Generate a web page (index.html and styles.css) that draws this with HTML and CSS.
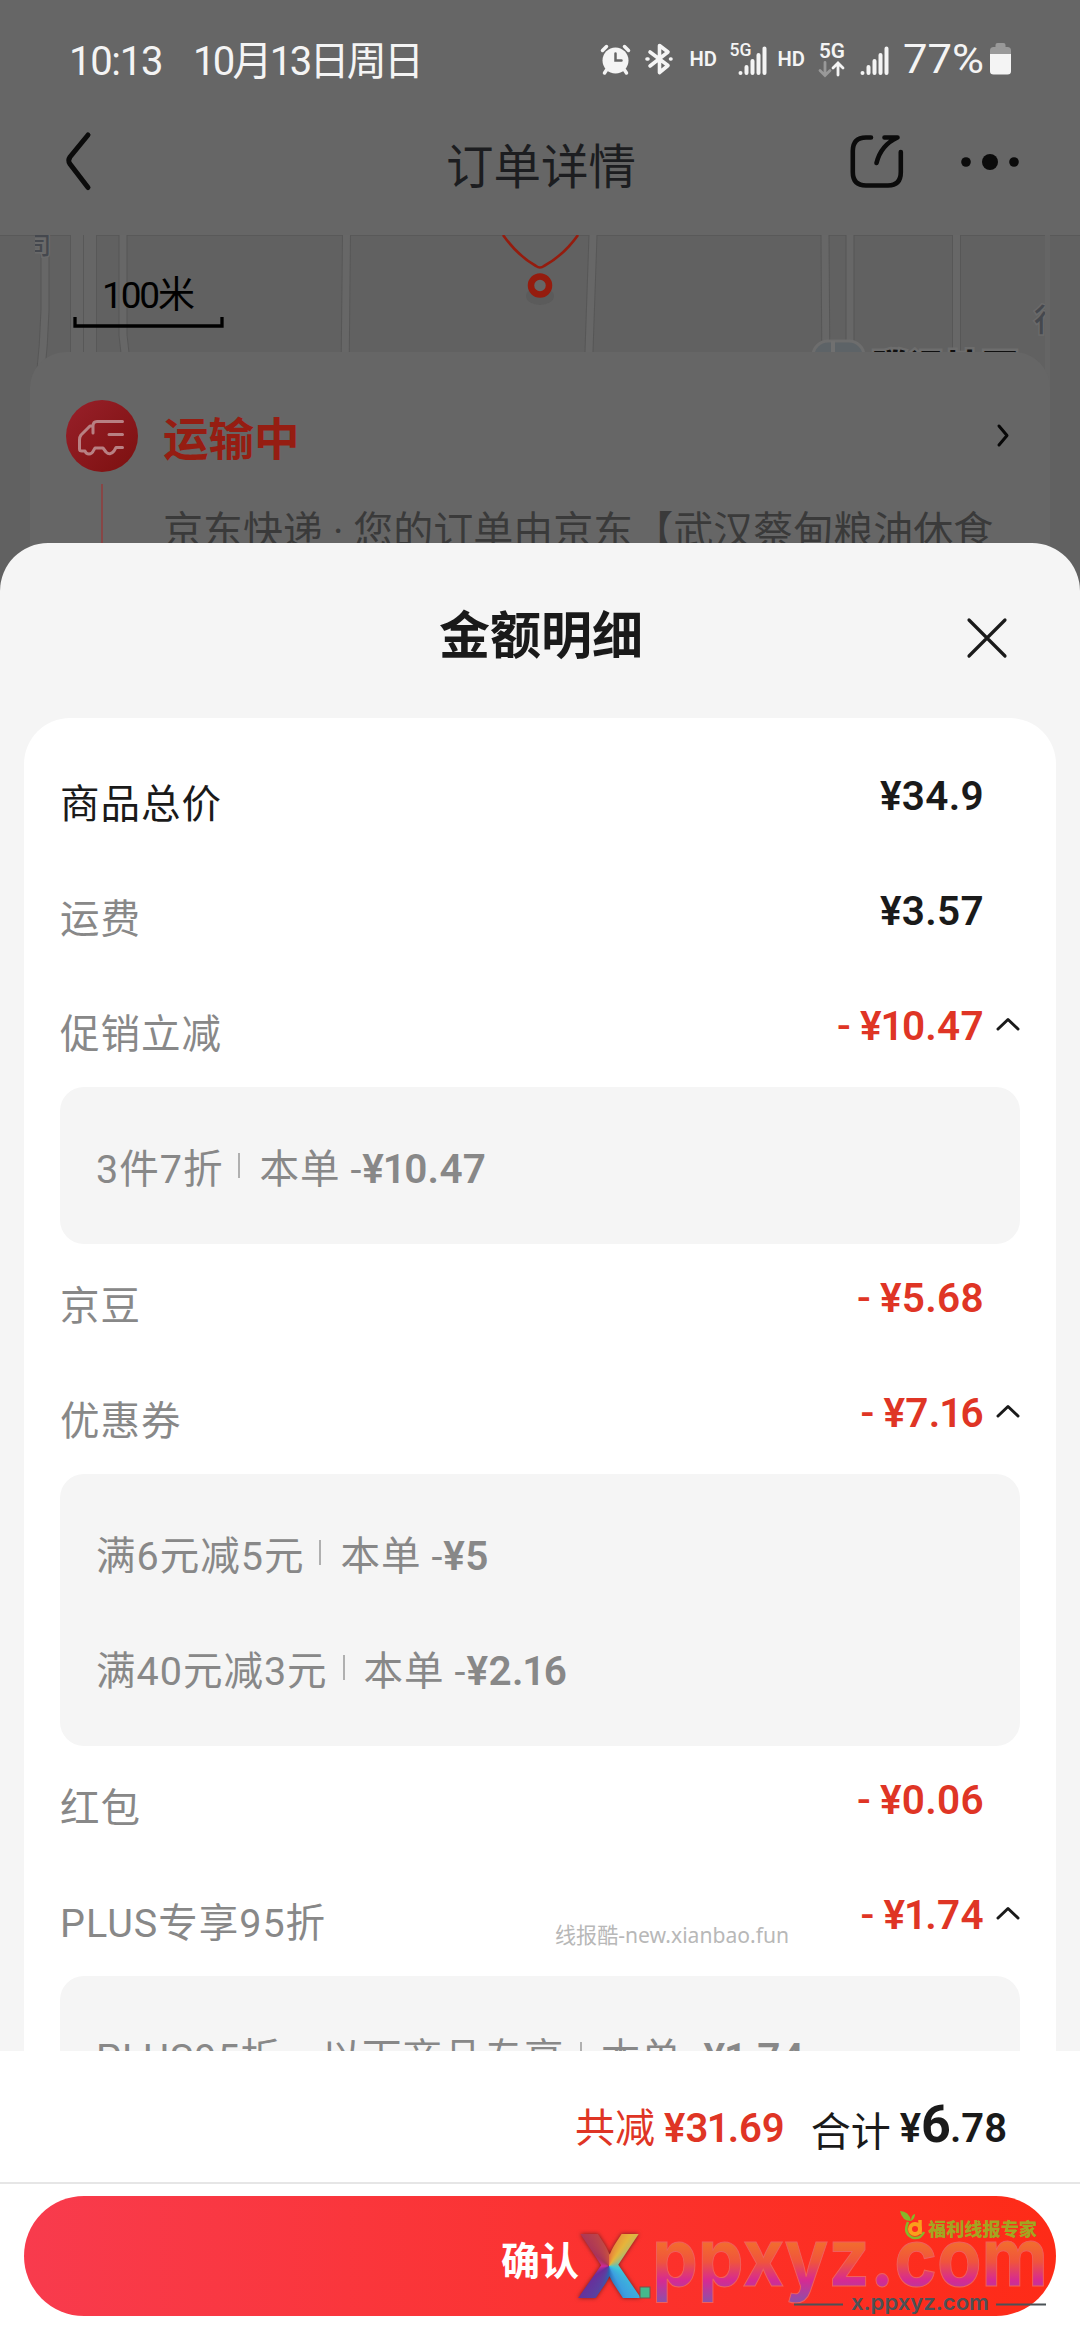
FILE: index.html
```html
<!DOCTYPE html>
<html lang="zh-CN">
<head>
<meta charset="utf-8">
<title>金额明细</title>
<link rel="stylesheet" href="styles.css">
</head>
<body>
<div class="screen">
  <div class="page">
    <header class="status">
      <span class="time">10:13</span><span class="date">10月13日周日</span>
      <svg class="status-icons" width="412" height="40" viewBox="600 39 412 40">
        <g fill="#f4f4f4" stroke="#f4f4f4" stroke-linecap="round">
          <circle cx="615.5" cy="60.500" r="13" stroke="none"/>
          <path d="M602.500 50.500l4-4M628.500 50.500l-4-4M606.500 70l-2 3M624.500 70l2 3" stroke-width="3.500"/>
          <path d="M615.500 53.500v7h6" fill="none" stroke="#666" stroke-width="2.500"/>
          <path d="M650 52l18 13.500-8.500 7V45.500l8.500 6.500L650 66" fill="none" stroke-width="3.600" stroke-linejoin="round"/>
          <path d="M647 59h1M670.500 59h.5" stroke-width="3.600"/>
          <path d="M740.500 73v.1M746.500 67v6M752.500 61v12M758.500 55v18M764.500 48.500V73" stroke-width="4"/>
          <path d="M862.500 73v.1M868.500 67v6M874.500 61v12M880.500 55v18M886.500 48.500V73" stroke-width="4"/>
          <path d="M838 75V63.500M833 68l5-5 5 5" fill="none" stroke-width="2.800"/>
          <path d="M825 62.500V75M820 70.500l5 5 5-5" fill="none" stroke="#999" stroke-width="2.800"/>
        </g>
        <rect x="990" y="47" width="21" height="27" rx="3.500" fill="#999"/>
        <rect x="995.500" y="43" width="10" height="6" rx="2" fill="#999"/>
        <path d="M990 54h21v17a3.500 3.500 0 0 1-3.500 3.500h-14a3.500 3.500 0 0 1-3.500-3.500z" fill="#f4f4f4"/>
        <g class="sig">
          <text x="689.500" y="65.500" textLength="27.500" lengthAdjust="spacingAndGlyphs">HD</text>
          <text x="777.500" y="65.500" textLength="27.500" lengthAdjust="spacingAndGlyphs">HD</text>
          <text class="sig-light" x="729.500" y="55.500" textLength="22" lengthAdjust="spacingAndGlyphs">5G</text>
          <text x="819" y="57.500" textLength="26" lengthAdjust="spacingAndGlyphs">5G</text>
          <text class="pct" x="903" y="72.500" textLength="81" lengthAdjust="spacingAndGlyphs">77%</text>
        </g>
      </svg>
    </header>
    <nav class="nav">
      <svg class="back" width="30" height="64" viewBox="64 130 30 64"><path d="M88 135L70 157Q67.500 160.500 70 164L88 187.500" fill="none" stroke="#0b0b0b" stroke-width="5" stroke-linecap="round"/></svg>
      <h1 class="nav-title">订单详情</h1>
      <svg class="tools" width="172" height="64" viewBox="848 130 172 64">
        <path d="M871 137.500H866Q852.800 137.500 852.800 151V172Q852.800 185.500 866 185.500H888Q900.800 185.500 900.800 172V152M884.500 137.500H897.500Q881 145 876.500 163" fill="none" stroke="#0b0b0b" stroke-width="4.600" stroke-linecap="round" stroke-linejoin="round"/>
        <circle cx="966" cy="162" r="4.800"/><circle cx="990" cy="162" r="8"/><circle cx="1014" cy="162" r="4.800"/>
      </svg>
    </nav>
    <svg class="map" width="1080" height="160" viewBox="0 235 1080 160">
      <rect x="0" y="235" width="1080" height="160" fill="#616161"/>
      <path d="M0 235.500H1080" stroke="#595959"/>
      <g fill="none">
        <path d="M45 235V310Q44 345 40 380M123 235V335L128 380M346.500 235L345 380M593 235L588 380M825 235L826 380M850 235V380M956.500 235V380" stroke="#575757" stroke-width="9"/>
        <path d="M45 235V310Q44 345 40 380M123 235V335L128 380M346.500 235L345 380M593 235L588 380M825 235L826 380M850 235V380M956.500 235V380" stroke="#676767" stroke-width="7"/>
        <path d="M77 235V380M90 235V380" stroke="#666" stroke-width="12"/>
        <path d="M83.500 235V380M70.500 235V380M96.500 235V380" stroke="#585858"/>
      </g>
      <rect x="1045" y="235" width="5" height="160" fill="#656565"/>
      <svg x="35" y="235" width="20" height="30" viewBox="35 235 20 30"><text class="poi" x="27" y="254">司</text></svg>
      <svg x="1030" y="300" width="15" height="36" viewBox="1030 300 15 36"><text class="poi poi-lg" x="1034" y="331">行</text></svg>
      <path d="M503 235Q518 256 536 266Q540 269 544 266Q564 255 578 235" fill="none" stroke="#951c0e" stroke-width="2.600"/>
      <ellipse cx="540" cy="296" rx="14" ry="9" fill="#5b5b5b"/>
      <circle cx="540" cy="285.500" r="9" fill="#666" stroke="#951c0e" stroke-width="6.500"/>
      <text class="scale" x="102" y="308" textLength="93">100米</text>
      <path d="M75 317V326H222V317" fill="none" stroke="#000" stroke-width="3.300"/>
      <rect x="813" y="341" width="51" height="36" rx="15" fill="#5d6367" stroke="#6d6d6d" stroke-width="3"/>
      <path d="M833 341v12" stroke="#707070" stroke-width="4"/>
      <text class="brand" x="872" y="380.500" textLength="146">腾讯地图</text>
    </svg>
    <section class="track">
      <div class="track-row">
        <svg class="truck-icon" width="72" height="74" viewBox="66 399 72 74">
          <defs><linearGradient id="tg" x1="0" y1="0" x2="1" y2="1"><stop offset="0" stop-color="#98202a"/><stop offset="1" stop-color="#7c100f"/></linearGradient></defs>
          <circle cx="102" cy="436" r="36" fill="url(#tg)"/>
          <path d="M122.500 421.500H97Q93 421.500 93 426V433M93 426H90L81 435Q79.500 437 79.500 440V449Q79.500 451 82 451H85Q86 454 89 454Q92 454 93.500 450.500L95 448H103L106 452Q110 456 114 451L116 447.500H122.500M109 434.500H122.500" fill="none" stroke="#b88083" stroke-width="3" stroke-linecap="round" stroke-linejoin="round"/>
        </svg>
        <h2 class="track-title">运输中</h2>
        <svg class="go" width="20" height="30" viewBox="993 421 20 30"><path d="M998 426L1006 435.500L998 445" fill="none" stroke="#080808" stroke-width="3" stroke-linecap="round" stroke-linejoin="round"/></svg>
      </div>
      <div class="track-info"><i class="track-line"></i><p class="track-text">京东快递 · 您的订单由京东【武汉蔡甸粮油休食</p></div>
    </section>
  </div>

  <main class="sheet">
    <div class="sheet-head">
      <h2 class="sheet-title">金额明细</h2>
      <svg class="close" width="44" height="44" viewBox="0 0 44 44"><path d="M4 4L40 40M40 4L4 40" stroke="#1a1a1a" stroke-width="3.200" stroke-linecap="round"/></svg>
    </div>
    <div class="card">
      <div class="row"><span class="label dark">商品总价</span><span class="price">¥34.9</span></div>
      <div class="row"><span class="label">运费</span><span class="price">¥3.57</span></div>
      <div class="row"><span class="label">促销立减</span><span class="price red"><i>-</i>¥<em>1</em>0.47</span><svg class="up" viewBox="0 0 24 14"><path d="M2 12L12 2.500L22 12"/></svg></div>
      <div class="box"><div class="line"><span>3件7折</span><i class="sep"></i><span>本单</span><span class="cut">-<b>¥<em>1</em>0.47</b></span></div></div>
      <div class="row"><span class="label">京豆</span><span class="price red"><i>-</i>¥5.68</span></div>
      <div class="row"><span class="label">优惠券</span><span class="price red"><i>-</i>¥7.<em>1</em>6</span><svg class="up" viewBox="0 0 24 14"><path d="M2 12L12 2.500L22 12"/></svg></div>
      <div class="box">
        <div class="line"><span>满6元减5元</span><i class="sep"></i><span>本单</span><span class="cut">-<b>¥5</b></span></div>
        <div class="line"><span>满40元减3元</span><i class="sep"></i><span>本单</span><span class="cut">-<b>¥2.<em>1</em>6</b></span></div>
      </div>
      <div class="row"><span class="label">红包</span><span class="price red"><i>-</i>¥0.06</span></div>
      <div class="row"><span class="label">PLUS专享95折</span><span class="price red"><i>-</i>¥<em>1</em>.74</span><svg class="up" viewBox="0 0 24 14"><path d="M2 12L12 2.500L22 12"/></svg></div>
      <div class="box"><div class="line"><span>PLUS95折，以下商品专享</span><i class="sep"></i><span>本单</span><span class="cut">-<b>¥<em>1</em>.74</b></span></div></div>
    </div>
  </main>

  <footer class="footer">
    <div class="totals">
      <span class="saved">共减</span><span class="saved-price">¥3<em>1</em>.69</span>
      <span class="sum">合计</span><span class="sum-price">¥<big>6</big>.78</span>
    </div>
    <div class="action"><button class="confirm">确认</button></div>
  </footer>

  <div class="stamp">线报酷-new.xianbao.fun</div>
  <div class="logo-x">X</div>
  <svg class="logo" width="480" height="120" viewBox="600 2205 480 120">
    <defs>
      <linearGradient id="lg" gradientUnits="userSpaceOnUse" x1="0" y1="2240" x2="0" y2="2302">
        <stop offset="0" stop-color="#f2702c"/><stop offset=".35" stop-color="#f0543c"/><stop offset=".65" stop-color="#d62a92"/><stop offset="1" stop-color="#8d50a8"/>
      </linearGradient>
    </defs>
    <rect x="640" y="2287" width="10" height="11" fill="#45b98c" stroke="#7b5048"/>
    <text class="logo-word" x="652" y="2286" textLength="396" lengthAdjust="spacingAndGlyphs" fill="url(#lg)">ppxyz.com</text>
    <text class="logo-sub" x="851" y="2310" textLength="138" lengthAdjust="spacingAndGlyphs">x.ppxyz.com</text>
    <path d="M794 2304.500H843M996 2304.500H1046" stroke="#4b5257" stroke-width="2"/>
    <text class="logo-cn" x="928" y="2236" textLength="109" lengthAdjust="spacingAndGlyphs">福利线报专家</text>
    <path d="M900 2211Q909 2211 911 2221Q902 2221 900 2211M911 2221Q911 2215 915 2214Q915 2219 911 2221" fill="#86b82a"/>
    <path d="M908 2222Q903 2233 912 2237.500Q920 2240 924 2232" fill="none" stroke="#86b82a" stroke-width="2.500"/>
    <circle cx="915" cy="2229" r="5" fill="none" stroke="#f9a01b" stroke-width="4"/>
    <path d="M920 2220V2234" stroke="#f9a01b" stroke-width="3.500"/>
  </svg>
</div>
</body>
</html>
```
FILE: styles.css
```css
* { box-sizing: border-box; margin: 0; padding: 0; }
body { width: 1080px; font-family: Roboto, "Noto Sans CJK SC", sans-serif; background: #616161; }
i, em { font-style: normal; }
em { margin: 0 -2px 0 -1.500px; }
svg { display: block; flex: none; }
.screen { position: relative; width: 1080px; height: 2340px; overflow: hidden; display: flex; flex-direction: column; background: #616161; }

/* dimmed order page */
.page { height: 591px; flex: none; overflow: hidden; background: #616161; margin-bottom: -48px; }
.status { height: 118px; display: flex; align-items: flex-start; padding: 40px 68px 0 69px; background: #666; color: #f4f4f4; font-size: 40px; line-height: 44px; }
.time { width: 124px; letter-spacing: -1.300px; }
.date { letter-spacing: -2.700px; white-space: nowrap; }
.status-icons { margin: -1px 0 0 auto; }
.sig { fill: #f4f4f4; font-size: 20px; font-weight: 600; }
.sig-light { font-size: 17.500px; font-weight: 500; }
.pct { font-size: 40px; font-weight: 400; }
.nav { height: 117px; display: flex; align-items: flex-start; padding: 12px 60px 0 64px; background: #666; }
.nav-title { flex: 1; padding-left: 352px; padding-top: 10px; font-size: 47.500px; line-height: 56px; font-weight: 400; color: #1c1d20; }
.tools { fill: #0b0b0b; }
.poi { font-size: 24px; font-weight: 500; fill: #45484e; stroke: #6a6a6a; stroke-width: 3px; paint-order: stroke; }
.poi-lg { font-size: 31px; }
.scale { font-size: 37px; fill: #000; }
.brand { font-size: 36px; font-weight: 900; fill: #101010; stroke: #6d6d6d; stroke-width: 5px; paint-order: stroke; }
.track { position: relative; margin: -43px 30px 0; padding: 47px 36px 0 36px; height: 260px; border-radius: 36px 36px 0 0; background: #666; }
.track-row { display: flex; align-items: center; height: 74px; }
.track-title { flex: 1; padding: 10px 0 0 25px; font-size: 45.500px; line-height: 60px; font-weight: 600; color: #961d12; }
.track-info { display: flex; padding-top: 11px; }
.track-line { width: 2px; height: 110px; margin-left: 35px; background: #874646; }
.track-text { margin-left: 60px; padding-top: 18px; font-size: 40px; line-height: 60px; color: #3a3a3a; white-space: nowrap; }

/* bottom sheet */
.sheet { position: relative; height: 1508px; flex: none; padding: 0 24px; border-radius: 48px 48px 0 0; background: #f5f5f5; overflow: hidden; }
.sheet-head { height: 175px; display: flex; align-items: center; padding: 12px 47px 0 415px; }
.sheet-title { flex: 1; font-size: 51px; line-height: 70px; font-weight: 600; color: #1a1a1a; }
.sheet-head .close { margin-top: 3px; }
.card { height: 1500px; padding: 24px 36px 0; border-radius: 46px 46px 0 0; background: #fff; }
.row { height: 115px; position: relative; display: flex; align-items: center; padding-right: 36px; }
.label { flex: 1; padding-top: 10px; font-size: 39.500px; letter-spacing: 1px; line-height: 60px; color: #888; }
.dark { color: #1a1a1a; }
.price { padding-bottom: 7px; font-size: 40.500px; letter-spacing: .300px; line-height: 48px; font-weight: 600; color: #1a1a1a; }
.price i { margin-right: 9px; font-weight: 500; }
.red { color: #df3525; }
.up { width: 24px; height: 14px; margin: 0 -36px 11px 12px; fill: none; stroke: #1a1a1a; stroke-width: 3px; stroke-linecap: round; stroke-linejoin: round; }
.box { padding: 21px 36px; border-radius: 24px; background: #f5f5f5; }
.line { height: 115px; padding-top: 8px; display: flex; align-items: center; font-size: 39.500px; letter-spacing: 1px; line-height: 60px; color: #888; white-space: nowrap; }
.line b { font-size: 40.500px; letter-spacing: .300px; font-weight: 600; }
.sep { width: 2px; height: 25px; margin: 0 19px 8px 15px; background: #b0b0b0; }
.cut { margin-left: 10px; }

/* totals and confirm */
.footer { flex: none; height: 289px; background: #fff; }
.totals { height: 133px; border-bottom: 2px solid #e6e6e6; display: flex; justify-content: flex-end; align-items: flex-start; padding: 48px 73px 0 0; font-size: 40px; line-height: 60px; color: #1a1a1a; white-space: nowrap; }
.saved, .saved-price { color: #df3525; }
.saved-price, .sum-price { font-weight: 600; margin-left: 9px; }
.sum { margin: 4px 0 0 26px; }
.sum-price big { font-size: 52px; font-weight: 700; line-height: 1px; margin-right: -1px; }
.action { padding: 12px 24px 0; }
.confirm { display: block; width: 100%; height: 120px; padding: 3px 0 0; border: 0; border-radius: 60px; background: linear-gradient(90deg, #f83b4d, #fe2b17); color: #fff; font: 600 39px/60px "Noto Sans CJK SC", sans-serif; }

/* watermarks laid over the sheet */
.stamp { position: absolute; left: 555px; top: 1920px; font: 21.100px/30px "Noto Sans", "Noto Sans CJK SC", sans-serif; color: #b8b8b8; white-space: nowrap; }
.logo { position: absolute; left: 600px; top: 2205px; }
.logo-x { position: absolute; left: 576px; top: 2212px; width: 66px; height: 108px; font: 800 88px/108px Inter, sans-serif; color: transparent; background: conic-gradient(from 0deg at 50% 50%, #e8743a 0deg, #e7b43a 35deg, #3ec6d8 105deg, #3c9fe0 150deg, #2a63b0 180deg, #5b3fa0 205deg, #6a2d9a 235deg, #d12a98 268deg, #a8335a 310deg, #c8503f 360deg); -webkit-background-clip: text; background-clip: text; filter: drop-shadow(0 0 2px #6e2020); }
.logo-word { font: 700 80px Inter, sans-serif; stroke: #f0605c; stroke-width: 1px; }
.logo-sub { font: 600 20.500px Inter, sans-serif; fill: #4b5257; }
.logo-cn { font: 900 18.500px "Noto Sans CJK SC", sans-serif; fill: #a3a521; }
```
